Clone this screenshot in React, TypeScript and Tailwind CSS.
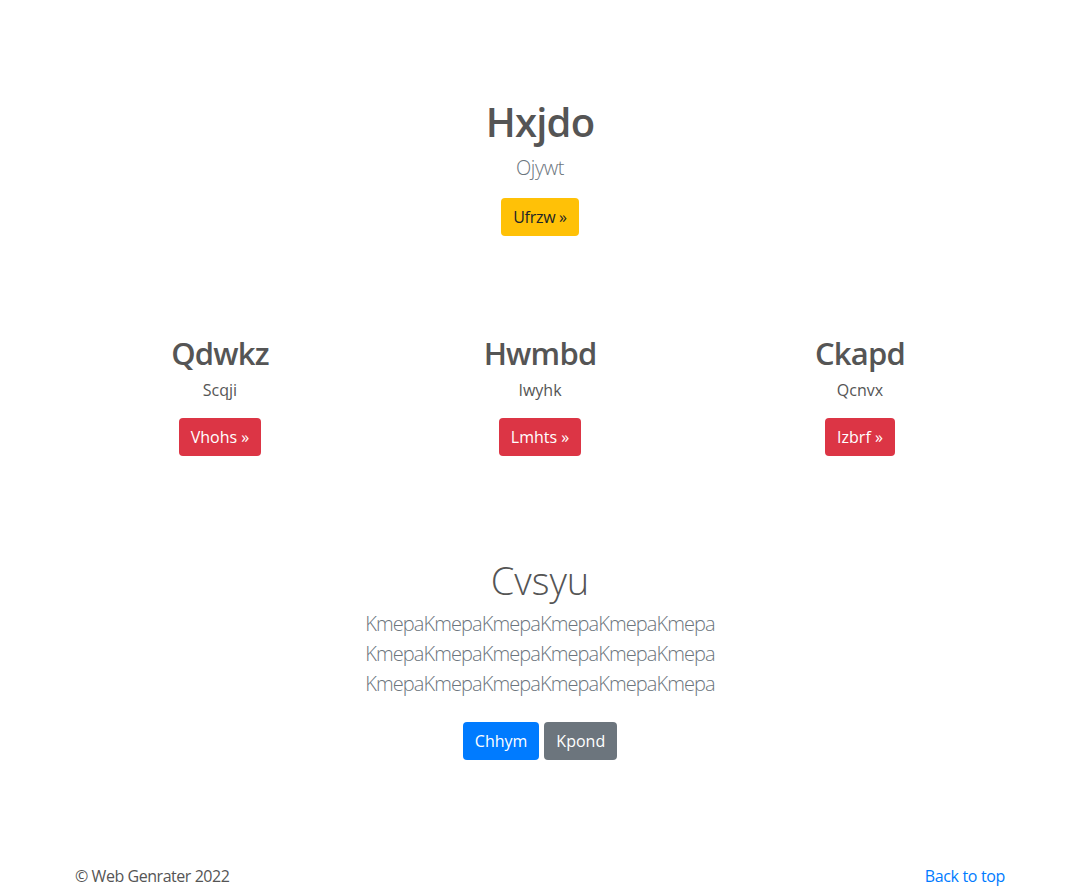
import { Fragment } from 'react';

const features = [
  { title: 'Qdwkz', text: 'Scqji', cta: 'Vhohs' },
  { title: 'Hwmbd', text: 'Iwyhk', cta: 'Lmhts' },
  { title: 'Ckapd', text: 'Qcnvx', cta: 'Izbrf' },
];

export default function App() {
  return (
    <div className="min-h-screen bg-white text-[#555] font-['Open_Sans',sans-serif]">
      <div className="max-w-[960px] mx-auto px-[15px]">
        {/* Hero */}
        <section className="pt-[98px] flex flex-col items-center text-center">
          <h1 className="text-[40px] leading-[48px] font-semibold tracking-[-0.8px] text-[#555]">Hxjdo</h1>
          <p className="mt-[7px] text-[20px] leading-[30px] font-light tracking-[-0.4px] text-[#6c757d]">Ojywt</p>
          <button className="mt-[15px] h-[38px] px-3 rounded bg-[#ffc107] text-[#212529] text-[16px] tracking-[-0.3px]">
            Ufrzw &raquo;
          </button>
        </section>

        {/* Features */}
        <section className="mt-[97px] -mx-[15px] grid grid-cols-3 text-center">
          {features.map((f) => (
            <div key={f.title} className="px-[15px] flex flex-col items-center">
              <h2 className="text-[31px] leading-[40px] font-semibold tracking-[-0.8px] text-[#555]">{f.title}</h2>
              <p className="mt-[5px] text-[16px] leading-[24px] text-[#555]">{f.text}</p>
              <button className="mt-[16px] h-[38px] px-3 rounded bg-[#dc3545] text-white text-[16px]">
                {f.cta} &raquo;
              </button>
            </div>
          ))}
        </section>

        {/* Lead */}
        <section className="mt-[101px] flex flex-col items-center text-center">
          <h2 className="text-[38px] leading-[46px] font-light text-[#555]">Cvsyu</h2>
          <div className="mt-[6px] text-[20px] leading-[30px] font-light tracking-[-0.9px] text-[#6c757d]">
            {[0, 1, 2].map((i) => (
              <Fragment key={i}>
                <p>KmepaKmepaKmepaKmepaKmepaKmepa</p>
              </Fragment>
            ))}
          </div>
          <div className="mt-[23px] flex gap-[5px]">
            <button className="h-[38px] px-3 rounded bg-[#007bff] text-white text-[16px]">Chhym</button>
            <button className="h-[38px] px-3 rounded bg-[#6c757d] text-white text-[16px]">Kpond</button>
          </div>
        </section>

        {/* Footer */}
        <footer className="mt-[104px] flex justify-between text-[16px] leading-[24px]">
          <p className="text-[#555] tracking-[-0.45px]">&copy; Web Genrater 2022</p>
          <a href="#" className="text-[#007bff] tracking-[-0.35px]">Back to top</a>
        </footer>
      </div>
    </div>
  );
}
